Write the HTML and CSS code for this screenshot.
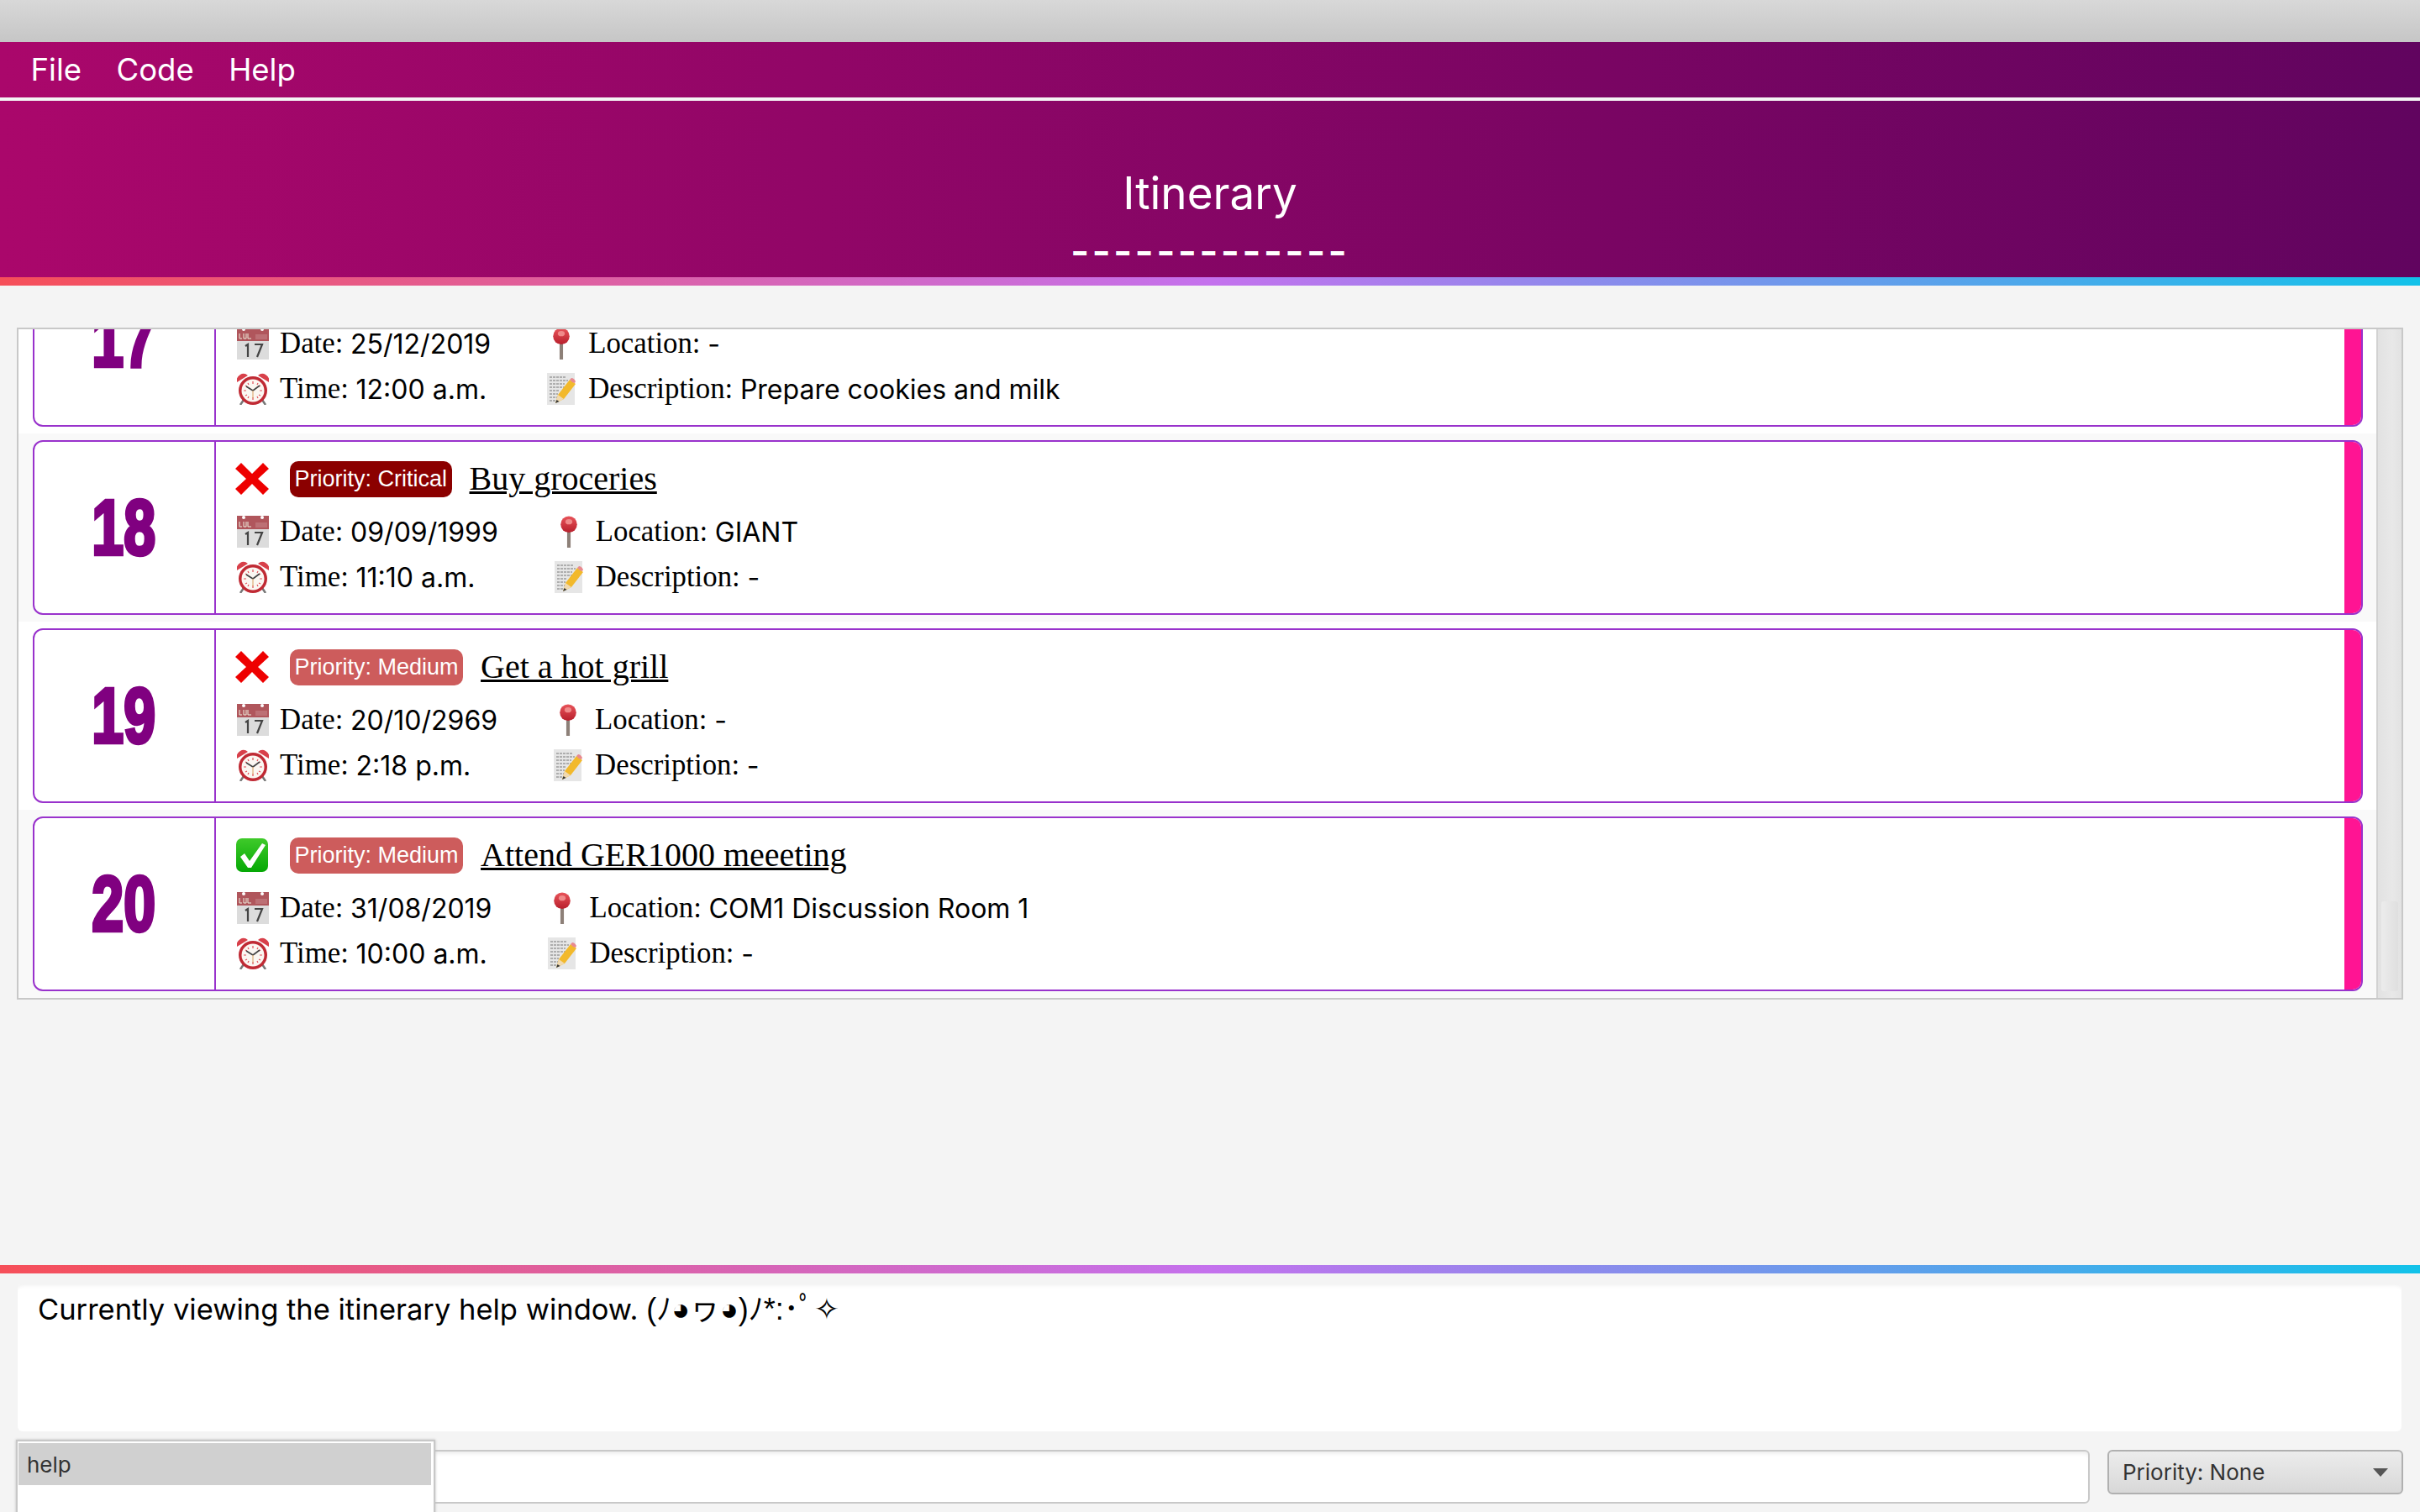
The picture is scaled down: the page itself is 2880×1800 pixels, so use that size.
FILE: index.html
```html
<!DOCTYPE html>
<html lang="en">
<head>
<meta charset="utf-8">
<title>Itinerary</title>
<link rel="stylesheet" href="styles.css">
</head>
<body>
<svg class="defs" width="0" height="0" aria-hidden="true">
  <defs>
    <linearGradient id="gPin" x1="0" y1="0" x2="0" y2="1"><stop offset="0" stop-color="#e8545a"/><stop offset="1" stop-color="#b81f2c"/></linearGradient>
    <linearGradient id="gGreen" x1="0" y1="0" x2="0" y2="1"><stop offset="0" stop-color="#3fca2a"/><stop offset="1" stop-color="#05a805"/></linearGradient>
    <symbol id="i-cross" viewBox="0 0 40 40"><path d="M7 1 L20 14 L33 1 L40 8 L27 20 L40 32 L33 39 L20 26 L7 39 L0 32 L13 20 L0 8 Z" fill="#ee0000"/></symbol>
    <symbol id="i-check" viewBox="0 0 40 40"><rect x="1" y="0" width="38" height="40" rx="7" fill="url(#gGreen)"/><path d="M6 22 L11 18 L17 27 L32 6 L36 8 L19 35 L15 35 Z" fill="#fff"/></symbol>
    <symbol id="i-cal" viewBox="0 0 38 38"><rect width="38" height="38" fill="#dcdcdc"/><rect width="38" height="16" fill="#b0565c"/><circle cx="8" cy="2" r="2" fill="#fff"/><circle cx="30" cy="2" r="2" fill="#fff"/><path d="M22 9h14M22 11h14M22 13h14" stroke="#c98a8e" stroke-width="1"/><path d="M3 7v6h3M8 7v6h3v-6M13 7v6h4" stroke="#eed" stroke-width="1" fill="none"/><path d="M10 22l3-2v15M21 20h9l-6 15" stroke="#444" stroke-width="2.2" fill="none"/></symbol>
    <symbol id="i-clock" viewBox="0 0 38 38"><path d="M8 32l-4 6M30 32l4 6" stroke="#777" stroke-width="2.500"/><path d="M0 11a8 8 0 0 1 13-8zM38 11a8 8 0 0 0-13-8z" fill="#d8404a"/><circle cx="19" cy="21" r="17" fill="#c02a34"/><circle cx="19" cy="21" r="13.500" fill="#fbf7f2"/><path d="M19 10v3M19 29v3M8 21h3M27 21h3M13 12l1 2M25 12l-1 2M13 30l1-2M25 30l-1-2M10 15l2 1M28 15l-2 1M10 27l2-1M28 27l-2-1" stroke="#e0505a" stroke-width="1.200"/><path d="M19 21L11 16M19 21L27 15" stroke="#444" stroke-width="1.600"/><path d="M19 21v9" stroke="#d9a060" stroke-width="1"/></symbol>
    <symbol id="i-pin" viewBox="0 0 20 37"><rect x="8" y="16" width="4" height="21" fill="#8d8078"/><circle cx="10" cy="10" r="9.500" fill="url(#gPin)"/><ellipse cx="10" cy="7" rx="4" ry="3" fill="#f08a8a"/></symbol>
    <symbol id="i-memo" viewBox="0 0 34 38"><rect width="33" height="38" fill="#e6e6e6"/><path d="M3 5h20M3 9h22M3 13h18M3 17h20M3 21h12M3 25h10M3 29h10M3 33h8" stroke="#777" stroke-width="1" stroke-dasharray="3 1"/><path d="M10 36L13 26 27 8 34 13 20 31Z" fill="#f2b92c"/><path d="M27 8l2-2q3 0 5 4l-1 2q-3 0-5-3z" fill="#e88a90"/><path d="M10 36l3-10 7 5z" fill="#f0d9b0"/><path d="M10 36l1.500-4 3 2z" fill="#333"/></symbol>
  </defs>
</svg>

<div class="app">
  <div class="titlebar"></div>
  <nav class="menubar">
    <span class="menu-item">File</span>
    <span class="menu-item">Code</span>
    <span class="menu-item">Help</span>
  </nav>
  <header class="banner">
    <div class="banner-title">Itinerary</div>
    <div class="banner-dash">-------------</div>
  </header>
  <div class="rainbow"></div>

  <main class="main">
    <section class="list">
      <div class="list-view">
        <div class="rows">

          <div class="row">
            <article class="card">
              <div class="num"><span class="digits">17</span></div>
              <div class="body">
                <div class="head">
                  <svg class="state"><use href="#i-check"/></svg>
                  <span class="pill medium">Priority: Medium</span>
                  <span class="name">Prepare for Christmas</span>
                </div>
                <div class="fields">
                  <div class="field"><svg class="ic"><use href="#i-cal"/></svg><span class="lab">Date: </span><span class="val">25/12/2019</span></div>
                  <div class="field"><svg class="ic"><use href="#i-pin"/></svg><span class="lab">Location: </span><span class="val">-</span></div>
                  <div class="field"><svg class="ic"><use href="#i-clock"/></svg><span class="lab">Time: </span><span class="val">12:00 a.m.</span></div>
                  <div class="field"><svg class="ic"><use href="#i-memo"/></svg><span class="lab">Description: </span><span class="val">Prepare cookies and milk</span></div>
                </div>
              </div>
              <div class="accent"></div>
            </article>
          </div>

          <div class="row alt">
            <article class="card">
              <div class="num"><span class="digits">18</span></div>
              <div class="body">
                <div class="head">
                  <svg class="state"><use href="#i-cross"/></svg>
                  <span class="pill critical">Priority: Critical</span>
                  <span class="name">Buy groceries</span>
                </div>
                <div class="fields">
                  <div class="field"><svg class="ic"><use href="#i-cal"/></svg><span class="lab">Date: </span><span class="val">09/09/1999</span></div>
                  <div class="field"><svg class="ic"><use href="#i-pin"/></svg><span class="lab">Location: </span><span class="val">GIANT</span></div>
                  <div class="field"><svg class="ic"><use href="#i-clock"/></svg><span class="lab">Time: </span><span class="val">11:10 a.m.</span></div>
                  <div class="field"><svg class="ic"><use href="#i-memo"/></svg><span class="lab">Description: </span><span class="val">-</span></div>
                </div>
              </div>
              <div class="accent"></div>
            </article>
          </div>

          <div class="row">
            <article class="card">
              <div class="num"><span class="digits">19</span></div>
              <div class="body">
                <div class="head">
                  <svg class="state"><use href="#i-cross"/></svg>
                  <span class="pill medium">Priority: Medium</span>
                  <span class="name">Get a hot grill</span>
                </div>
                <div class="fields">
                  <div class="field"><svg class="ic"><use href="#i-cal"/></svg><span class="lab">Date: </span><span class="val">20/10/2969</span></div>
                  <div class="field"><svg class="ic"><use href="#i-pin"/></svg><span class="lab">Location: </span><span class="val">-</span></div>
                  <div class="field"><svg class="ic"><use href="#i-clock"/></svg><span class="lab">Time: </span><span class="val">2:18 p.m.</span></div>
                  <div class="field"><svg class="ic"><use href="#i-memo"/></svg><span class="lab">Description: </span><span class="val">-</span></div>
                </div>
              </div>
              <div class="accent"></div>
            </article>
          </div>

          <div class="row alt">
            <article class="card">
              <div class="num"><span class="digits">20</span></div>
              <div class="body">
                <div class="head">
                  <svg class="state"><use href="#i-check"/></svg>
                  <span class="pill medium">Priority: Medium</span>
                  <span class="name">Attend GER1000 meeeting</span>
                </div>
                <div class="fields">
                  <div class="field"><svg class="ic"><use href="#i-cal"/></svg><span class="lab">Date: </span><span class="val">31/08/2019</span></div>
                  <div class="field"><svg class="ic"><use href="#i-pin"/></svg><span class="lab">Location: </span><span class="val">COM1 Discussion Room 1</span></div>
                  <div class="field"><svg class="ic"><use href="#i-clock"/></svg><span class="lab">Time: </span><span class="val">10:00 a.m.</span></div>
                  <div class="field"><svg class="ic"><use href="#i-memo"/></svg><span class="lab">Description: </span><span class="val">-</span></div>
                </div>
              </div>
              <div class="accent"></div>
            </article>
          </div>

        </div>
      </div>
      <div class="scrollbar"><div class="thumb"></div></div>
    </section>
  </main>

  <div class="rainbow"></div>

  <section class="status">Currently viewing the itinerary help window. <span class="kao">(ﾉ◕ヮ◕)ﾉ*:･ﾟ✧</span></section>

  <footer class="command">
    <div class="cmd-input"></div>
    <div class="select"><span>Priority: None</span><span class="arrow"></span></div>
    <div class="popup"><div class="popup-item">help</div></div>
  </footer>
</div>
</body>
</html>
```
FILE: styles.css
```css
* { box-sizing: border-box; }
html, body { margin: 0; height: 100%; }
body { background: #f4f4f4; font-family: "Inter", "Liberation Sans", sans-serif; overflow: hidden; }
.defs { position: absolute; }
.app { height: 1800px; display: flex; flex-direction: column; }

.titlebar { height: 50px; background: linear-gradient(#d8d8d8, #c6c6c6); }
.menubar { height: 66px; display: flex; gap: 41.5px; align-items: center; padding-left: 36.5px; background: linear-gradient(to right, #aa076b, #61045f); color: #fff; font-size: 36.5px; }
.banner { height: 210px; margin-top: 4px; display: flex; flex-direction: column; align-items: center; padding-top: 76px; background: linear-gradient(to right, #aa076b, #61045f); color: #fff; }
.banner-title { font-size: 53px; line-height: 68px; }
.banner-dash { font-size: 48px; line-height: 40px; letter-spacing: 3.2px; margin-top: 15px; font-weight: 600; }
.rainbow { height: 10px; flex: none; background: linear-gradient(to right, #f64f59, #c471ed, #12c2e9); }

.main { height: 1166px; flex: none; padding: 50px 20px 0; }
.list { height: 800px; width: 2840px; border: 2px solid #c8c8c8; display: flex; overflow: hidden; background: #fff; }
.list-view { flex: 1; min-width: 0; overflow: hidden; }
.rows { margin-top: -100px; }
.row { height: 224px; padding: 8px 16px 8px 17px; background: #fff; }
.row.alt { background: #f9f9f9; }
.card { height: 208px; display: flex; border: 2px solid #9932cc; border-radius: 12px; background: #fff; overflow: hidden; }
.num { width: 216px; flex: none; border-right: 2px solid #9932cc; display: flex; align-items: center; justify-content: center; color: #800080; font-family: "Liberation Sans", sans-serif; font-weight: 700; font-size: 92px; line-height: 1; padding-right: 2px; }
.digits { display: block; transform: scaleX(0.74); -webkit-text-stroke: 4.5px #800080; }
.body { flex: 1; min-width: 0; padding: 22px 0 0 23px; }
.accent { width: 20px; flex: none; background: #ff1493; }

.head { display: flex; align-items: center; height: 44px; }
.state { width: 40px; height: 40px; flex: none; }
.pill { margin-left: 25px; height: 43px; padding: 0 5.5px; display: flex; align-items: center; border-radius: 10px; color: #fff; font-family: "Liberation Sans", sans-serif; font-size: 27px; }
.critical { background: #8b0000; }
.medium { background: #cd5c5c; }
.name { margin-left: 21px; font-family: "Liberation Serif", serif; font-size: 40px; line-height: 42px; color: #000; text-decoration: underline; text-decoration-thickness: 3px; }

.fields { display: inline-grid; grid-template-columns: auto auto; column-gap: 63px; row-gap: 16px; margin-top: 22px; }
.field { display: flex; align-items: center; height: 38px; color: #000; white-space: pre; }
.ic { width: 38px; height: 38px; flex: none; margin: 0 13px 0 2px; }
.lab { font-family: "Liberation Serif", serif; font-size: 34.8px; }
.val { font-family: "Inter", "Liberation Sans", sans-serif; font-size: 32px; }

.scrollbar { width: 30px; flex: none; padding: 0 4px; border-left: 2px solid #d2d2d2; background: linear-gradient(to right, #e2e2e2, #e8e8e8 60%, #e2e2e2); display: flex; align-items: flex-end; }
.thumb { width: 20px; height: 107px; margin-bottom: 8px; border-radius: 3px; background: linear-gradient(to right, #ececec, #dfdfdf); }

.status { height: 176px; flex: none; margin: 12px 22px 0 21px; padding: 6px 24px 0; border-radius: 6px; background: #fff; box-shadow: inset 0 5px 5px -3px #efefef; font-size: 34.5px; line-height: 50px; color: #000; font-family: "Inter", sans-serif; }
.kao { font-family: "Liberation Sans", "Noto Sans CJK JP", "DejaVu Sans", sans-serif; font-size: 36px; }

.command { flex: 1; position: relative; display: flex; align-items: flex-start; padding: 22px 20px 0 21px; gap: 21px; }
.cmd-input { flex: 1; height: 64px; border: 2px solid #c8c8c8; border-radius: 6px; background: #fff; box-shadow: inset 0 5px 5px -3px #e8e8e8; }
.select { width: 352px; height: 53px; flex: none; display: flex; align-items: center; justify-content: space-between; padding: 0 16px; border: 2px solid #b0b0b0; border-radius: 6px; background: linear-gradient(#ececec, #d8d8d8); color: #333; font-size: 26px; }
.arrow { width: 0; height: 0; border-left: 9px solid transparent; border-right: 9px solid transparent; border-top: 10px solid #555; }
.popup { position: absolute; left: 19px; top: 10px; width: 499px; height: 90px; padding: 2px 3px 0 1px; border: 2px solid #c8c8c8; background: #fff; box-shadow: 0 0 3px #bbb; }
.popup-item { height: 50px; padding-left: 10px; display: flex; align-items: center; background: #d0d0d0; color: #333; font-size: 26px; }
```
